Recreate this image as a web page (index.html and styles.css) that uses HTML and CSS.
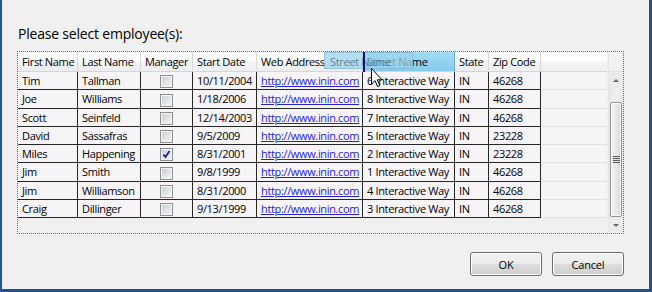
FILE: index.html
```html
<!DOCTYPE html>
<html lang="en">
<head>
    <meta charset="UTF-8">
    <title>Select Employees</title>
    <link rel="stylesheet" href="styles.css">
</head>
<body>
    <div class="dialog">
        <!-- prompt -->
        <h1 class="prompt">Please select employee(s):</h1>

        <!-- data grid -->
        <div class="grid">
            <div class="grid-main">
                <table class="employees">
                    <colgroup>
                        <col style="width: 60px">
                        <col style="width: 63px">
                        <col style="width: 52px">
                        <col style="width: 64px">
                        <col style="width: 106px">
                        <col style="width: 92px">
                        <col style="width: 34px">
                        <col style="width: 52px">
                        <col style="width: 66px">
                    </colgroup>
                    <thead>
                        <tr>
                            <th>First Name</th>
                            <th>Last Name</th>
                            <th>Manager</th>
                            <th>Start Date</th>
                            <th>Web Address</th>
                            <th class="dragging">Street Name</th>
                            <th>State</th>
                            <th>Zip Code</th>
                            <th class="filler"></th>
                        </tr>
                    </thead>
                    <tbody>
                        <tr>
                            <td>Tim</td><td>Tallman</td><td class="center"><span class="check"></span></td><td>10/11/2004</td>
                            <td><a href="#">http://www.inin.com</a></td><td>6 Interactive Way</td><td>IN</td><td>46268</td><td class="filler"></td>
                        </tr>
                        <tr>
                            <td>Joe</td><td>Williams</td><td class="center"><span class="check"></span></td><td>1/18/2006</td>
                            <td><a href="#">http://www.inin.com</a></td><td>8 Interactive Way</td><td>IN</td><td>46268</td><td class="filler"></td>
                        </tr>
                        <tr>
                            <td>Scott</td><td>Seinfeld</td><td class="center"><span class="check"></span></td><td>12/14/2003</td>
                            <td><a href="#">http://www.inin.com</a></td><td>7 Interactive Way</td><td>IN</td><td>46268</td><td class="filler"></td>
                        </tr>
                        <tr>
                            <td>David</td><td>Sassafras</td><td class="center"><span class="check"></span></td><td>9/5/2009</td>
                            <td><a href="#">http://www.inin.com</a></td><td>5 Interactive Way</td><td>IN</td><td>23228</td><td class="filler"></td>
                        </tr>
                        <tr>
                            <td>Miles</td><td>Happening</td>
                            <td class="center"><span class="check checked"><svg width="9" height="9" viewBox="0 0 9 9"><path d="M1.5 4.5 L3.5 7 L7.5 1" fill="none" stroke="#1c2170" stroke-width="1.8"/></svg></span></td>
                            <td>8/31/2001</td>
                            <td><a href="#">http://www.inin.com</a></td><td>2 Interactive Way</td><td>IN</td><td>23228</td><td class="filler"></td>
                        </tr>
                        <tr>
                            <td>Jim</td><td>Smith</td><td class="center"><span class="check"></span></td><td>9/8/1999</td>
                            <td><a href="#">http://www.inin.com</a></td><td>1 Interactive Way</td><td>IN</td><td>46268</td><td class="filler"></td>
                        </tr>
                        <tr>
                            <td>Jim</td><td>Williamson</td><td class="center"><span class="check"></span></td><td>8/31/2000</td>
                            <td><a href="#">http://www.inin.com</a></td><td>4 Interactive Way</td><td>IN</td><td>46268</td><td class="filler"></td>
                        </tr>
                        <tr>
                            <td>Craig</td><td>Dillinger</td><td class="center"><span class="check"></span></td><td>9/13/1999</td>
                            <td><a href="#">http://www.inin.com</a></td><td>3 Interactive Way</td><td>IN</td><td>46268</td><td class="filler"></td>
                        </tr>
                    </tbody>
                </table>
            </div>

            <!-- vertical scrollbar -->
            <div class="vscroll">
                <div class="vscroll-corner"></div>
                <div class="vscroll-arrow"><span class="tri-up"></span></div>
                <div class="vscroll-track">
                    <div class="thumb"><span class="grip"></span></div>
                </div>
                <div class="vscroll-arrow"><span class="tri-down"></span></div>
            </div>

            <!-- column being dragged -->
            <div class="drag-ghost">Street Name</div>
            <div class="drop-marker"></div>
            <svg class="cursor" width="13" height="20" viewBox="0 0 13 20">
                <path d="M0.5 0.5 L0.5 16 L4 12.6 L6.6 18.6 L8.8 17.6 L6.3 11.8 L11 11.8 Z" fill="#fff" stroke="#000" stroke-width="1"/>
            </svg>
        </div>

        <!-- buttons -->
        <div class="buttons">
            <button class="btn">OK</button>
            <button class="btn">Cancel</button>
        </div>
    </div>
</body>
</html>
```

FILE: styles.css
```css
* {
    margin: 0;
    padding: 0;
    box-sizing: border-box;
}

body {
    font-family: 'Segoe UI', 'Open Sans', sans-serif;
    font-size: 11px;
    letter-spacing: -0.35px;
    color: #000;
    background: #f0f0f0;
}

/* 对话框 */
.dialog {
    width: 652px;
    height: 292px;
    background: #f0f0f0;
    border-left: 2px solid #24538c;
    border-right: 3px solid #24538c;
    border-bottom: 3px solid #24538c;
    padding: 24px 25px 0 15px;
    display: flex;
    flex-direction: column;
}

.prompt {
    font-size: 14px;
    font-weight: normal;
    letter-spacing: -0.2px;
    line-height: 20px;
    margin-bottom: 7px;
    padding-left: 1px;
}

/* 表格 */
.grid {
    position: relative;
    display: flex;
    height: 183px;
    border: 1px dotted #5d6b7a;
    background: #f0f0f0;
}

.grid-main {
    flex: 1;
}

.employees {
    table-layout: fixed;
    border-collapse: separate;
    border-spacing: 0;
    width: 589px;
}

.employees thead tr {
    height: 20px;
}

.employees tbody tr {
    height: 18.25px;
}

.employees th {
    font-weight: normal;
    text-align: left;
    padding: 0 4px;
    white-space: nowrap;
    overflow: hidden;
    background: linear-gradient(#ffffff 0%, #fdfdfd 45%, #f3f4f6 55%, #eceef0 100%);
    border-right: 1px solid #d8d8d8;
    border-bottom: 1px solid #d5d5d5;
}

.employees th.dragging {
    background: linear-gradient(#a4dbf4 0%, #94d3f1 50%, #86cbee 100%);
    border-right: 1px solid #6fa9c8;
}

.employees th.filler {
    border-right: none;
}

.employees td {
    padding: 0 4px;
    white-space: nowrap;
    overflow: hidden;
    vertical-align: middle;
    background: #f7f4f7;
    border-right: 1px solid #262626;
    border-bottom: 1px solid #262626;
}

.employees td.center {
    text-align: center;
    padding: 0;
}

.employees td.filler {
    border-right: none;
    border-bottom: 1px solid #e2e2e2;
}

.employees a {
    color: #2323d4;
    text-decoration: underline;
}

/* 复选框 */
.check {
    display: inline-block;
    width: 13px;
    height: 13px;
    vertical-align: middle;
    border: 1px solid #8e8f8f;
    background: linear-gradient(135deg, #c7cbd1 0%, #e4e6e9 60%, #f5f5f5 100%);
    box-shadow: inset 0 0 0 1px #f4f4f4;
    position: relative;
}

.check.checked {
    background: linear-gradient(135deg, #c9cde6 0%, #e3e6f4 60%, #f3f4fa 100%);
}

.check svg {
    position: absolute;
    left: 1px;
    top: 1px;
}

/* 滚动条 */
.vscroll {
    width: 15px;
    display: flex;
    flex-direction: column;
    border-left: 1px solid #e6e6e6;
}

.vscroll-corner {
    height: 20px;
    background: #f2f2f2;
    border-bottom: 1px solid #e0e0e0;
}

.vscroll-arrow {
    height: 16px;
    display: flex;
    justify-content: center;
    align-items: center;
    background: #ebebeb;
}

.vscroll-track {
    flex: 1;
    padding-top: 14px;
    display: flex;
    flex-direction: column;
    background: linear-gradient(90deg, #e3e3e3, #efefef 30%, #efefef 70%, #e6e6e6);
}

.thumb {
    flex: 1;
    margin: 0 1px;
    border: 1px solid #959595;
    border-radius: 2px;
    background: linear-gradient(90deg, #f3f3f3 0%, #e8e8e8 50%, #d9d9d9 100%);
    box-shadow: inset 0 0 0 1px #fbfbfb;
    display: flex;
    justify-content: center;
    align-items: center;
}

.grip {
    width: 7px;
    height: 7px;
    background: repeating-linear-gradient(#5f5f5f 0 1px, #e0e0e0 1px 2px);
}

.tri-up {
    border-left: 3px solid transparent;
    border-right: 3px solid transparent;
    border-bottom: 3px solid #6a6a6a;
}

.tri-down {
    border-left: 3px solid transparent;
    border-right: 3px solid transparent;
    border-top: 3px solid #6a6a6a;
}

/* 拖动中的列头 */
.drag-ghost {
    position: absolute;
    left: 306px;
    top: 0;
    width: 89px;
    height: 17px;
    padding-left: 5px;
    line-height: 17px;
    color: rgba(50, 85, 105, 0.7);
    background: rgba(158, 210, 235, 0.75);
    border: 1px solid rgba(110, 170, 205, 0.5);
}

.drop-marker {
    position: absolute;
    left: 345px;
    top: 0;
    width: 2px;
    height: 20px;
    background: #12127a;
}

.cursor {
    position: absolute;
    left: 353px;
    top: 16px;
}

/* 按钮 */
.buttons {
    display: flex;
    justify-content: flex-end;
    gap: 10px;
    margin-top: 18px;
}

.btn {
    width: 72px;
    height: 24px;
    font-family: inherit;
    font-size: 11px;
    letter-spacing: -0.2px;
    color: #000;
    border: 1px solid #707070;
    border-radius: 3px;
    background: linear-gradient(#f2f2f2 0%, #ebebeb 50%, #dddddd 51%, #cfcfcf 100%);
    box-shadow: inset 0 0 0 1px #fcfcfc;
}
```
